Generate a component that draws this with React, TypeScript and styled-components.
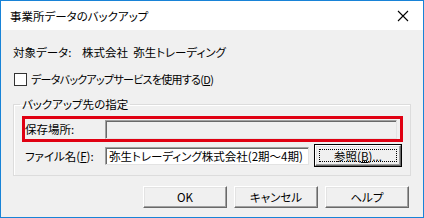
import styled, { createGlobalStyle, css } from "styled-components";

const GlobalStyle = createGlobalStyle`
  html, body {
    margin: 0;
    padding: 0;
    background: #f0f0f0;
  }
  body {
    font-family: "Noto Sans CJK JP", "Noto Sans", sans-serif;
    font-size: 11.5px;
    font-feature-settings: "palt";
    color: #000;
  }
`

const App = () => {
    return (
        <>
            <GlobalStyle/>
            <Window>
                <TitleBar>
                    <TitleText>事業所データのバックアップ</TitleText>
                    <CloseButton>
                        <svg width="12" height="12" viewBox="0 0 12 12">
                            <path d="M1 1 L11 11 M11 1 L1 11" stroke="#000" strokeWidth="1.1" fill="none"/>
                        </svg>
                    </CloseButton>
                </TitleBar>
                <Body>
                    <InfoRow>
                        <InfoLabel>対象データ:</InfoLabel>
                        <span>株式会社&nbsp;&nbsp;弥生トレーディング</span>
                    </InfoRow>
                    <CheckRow>
                        <CheckBox/>
                        <CondensedText>データバックアップサービスを使用する(<u>D</u>)</CondensedText>
                    </CheckRow>
                    <Group>
                        <Legend>バックアップ先の指定</Legend>
                        <HighlightRow>
                            <FieldLabel>保存場所:</FieldLabel>
                            <TextBox $disabled $width={292} $height={19}/>
                        </HighlightRow>
                        <FieldRow>
                            <FieldLabel>ファイル名(<u>F</u>):</FieldLabel>
                            <TextBox $width={204} $height={18}>弥生トレーディング株式会社(2期～4期)</TextBox>
                            <PushButton $default $width={86} $height={21}>
                                <FocusRect>参照(<u>B</u>)...</FocusRect>
                            </PushButton>
                        </FieldRow>
                    </Group>
                    <ButtonRow>
                        <PushButton $width={84} $height={22}>OK</PushButton>
                        <PushButton $width={84} $height={22}>キャンセル</PushButton>
                        <PushButton $width={84} $height={22}>ヘルプ</PushButton>
                    </ButtonRow>
                </Body>
            </Window>
        </>
    );
};

const Window = styled.div`
  width: 424px;
  height: 218px;
  box-sizing: border-box;
  border: 1px solid #1883d7;
  background: #f0f0f0;
  display: flex;
  flex-direction: column;
`

const TitleBar = styled.div`
  height: 29px;
  flex-shrink: 0;
  background: #fff;
  display: flex;
  align-items: center;
  justify-content: space-between;
  padding-left: 9px;
`

const TitleText = styled.div`
  line-height: 16px;
`

const CloseButton = styled.div`
  width: 34px;
  height: 29px;
  display: flex;
  align-items: center;
  justify-content: center;
  margin-right: 3px;
`

const Body = styled.div`
  padding: 12px 12px 0 12px;
  display: flex;
  flex-direction: column;
`

const InfoRow = styled.div`
  height: 20px;
  display: flex;
  align-items: center;
`

const InfoLabel = styled.span`
  width: 69px;
`

const CheckRow = styled.div`
  height: 20px;
  margin-top: 7px;
  display: flex;
  align-items: center;
  gap: 4px;
`

const CondensedText = styled.span`
  font-size: 11px;
  letter-spacing: -0.7px;
`

const CheckBox = styled.div`
  width: 11px;
  height: 11px;
  margin-left: 1px;
  background: #fff;
  border: 1px solid #333;
`

const Group = styled.fieldset`
  margin: 7px 0 0 0;
  padding: 4px 7px 9px 8px;
  border: 1px solid #dcdcdc;
  box-shadow: inset 1px 1px 0 #fff;
  min-width: 0;
`

const Legend = styled.legend`
  padding: 0 2px;
  margin-left: -2px;
  line-height: 16px;
`

const HighlightRow = styled.div`
  height: 26px;
  box-sizing: border-box;
  border: 3px solid #e00012;
  display: flex;
  align-items: center;
`

const FieldRow = styled.div`
  margin-top: 3px;
  padding-left: 3px;
  display: flex;
  align-items: center;
`

const FieldLabel = styled.span`
  width: 80px;
  flex-shrink: 0;
`

const TextBox = styled.div<{ $width: number; $height: number; $disabled?: boolean }>`
  width: ${({$width}) => $width}px;
  height: ${({$height}) => $height}px;
  box-sizing: border-box;
  border: 1px solid;
  border-color: #a0a0a0 #e3e3e3 #e3e3e3 #a0a0a0;
  box-shadow: inset 1px 1px 0 #696969;
  padding: 0 0 0 3px;
  display: flex;
  align-items: center;
  white-space: nowrap;
  overflow: hidden;
  background: ${({$disabled}) => $disabled ? "#f0f0f0" : "#fff"};
`

const PushButton = styled.div<{ $width: number; $height: number; $default?: boolean }>`
  width: ${({$width}) => $width}px;
  height: ${({$height}) => $height}px;
  box-sizing: border-box;
  margin-left: 6px;
  background: #f0f0f0;
  border: 1px solid;
  border-color: #fff #696969 #696969 #fff;
  box-shadow: inset -1px -1px 0 #a0a0a0, inset 1px 1px 0 #e3e3e3;
  display: flex;
  align-items: center;
  justify-content: center;
  ${({$default}) => $default && css`
    outline: 1px solid #000;
    outline-offset: 0;
    padding: 3px;
  `}
`

const FocusRect = styled.div`
  flex: 1;
  align-self: stretch;
  border: 1px dotted #000;
  display: flex;
  align-items: center;
  justify-content: center;
`

const ButtonRow = styled.div`
  margin-top: 10px;
  padding-right: 2px;
  display: flex;
  justify-content: flex-end;
  & > div {
    margin-left: 7px;
  }
`

export default App;
